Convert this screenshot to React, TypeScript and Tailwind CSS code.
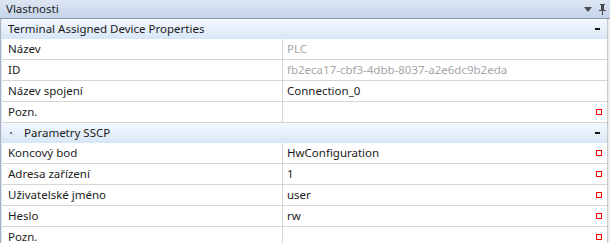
import React from 'react';

type Row = { label: string; value: string; readOnly?: boolean; marker?: boolean };

const general: Row[] = [
  { label: 'Název', value: 'PLC', readOnly: true },
  { label: 'ID', value: 'fb2eca17-cbf3-4dbb-8037-a2e6dc9b2eda', readOnly: true },
  { label: 'Název spojení', value: 'Connection_0' },
  { label: 'Pozn.', value: '', marker: true },
];

const sscp: Row[] = [
  { label: 'Koncový bod', value: 'HwConfiguration', marker: true },
  { label: 'Adresa zařízení', value: '1', marker: true },
  { label: 'Uživatelské jméno', value: 'user', marker: true },
  { label: 'Heslo', value: 'rw', marker: true },
  { label: 'Pozn.', value: '', marker: true },
];

const Category = ({ title, dot }: { title: string; dot?: boolean }) => (
  <div className="flex h-[20px] items-center bg-gradient-to-b from-[#f4f8fd] to-[#d7e6f7] pl-[6px] pr-[7px]">
    {dot && <span className="mr-[6px] ml-[2px] h-[2px] w-[2px] bg-[#777]" />}
    <span className={dot ? 'ml-[6px]' : ''}>{title}</span>
    <span className="ml-auto h-[2px] w-[5px] bg-[#111]" />
  </div>
);

const PropRow = ({ row }: { row: Row }) => (
  <div className="flex h-[21px] border-b border-[#d6d6d6]">
    <div className="flex w-[281px] items-center border-r border-[#d6d6d6] pl-[6px]">{row.label}</div>
    <div className="flex flex-1 items-center pl-[4px] pr-[5px]">
      <span className={row.readOnly ? 'text-[#a6a6a6]' : ''}>{row.value}</span>
      {row.marker && <span className="ml-auto h-[6px] w-[6px] border border-[#ff0000]" />}
    </div>
  </div>
);

export default function App() {
  return (
    <div
      className="h-[243px] w-[610px] overflow-hidden bg-white text-[11.5px] leading-none text-[#1b1b1b]"
      style={{ fontFamily: '"Segoe UI", "Noto Sans", sans-serif' }}
    >
      {/* title bar */}
      <div className="flex h-[19px] items-center border-b border-[#8e97a8] bg-gradient-to-b from-[#dde6f3] to-[#c5d3e9] pl-[6px] pr-[4px]">
        <span>Vlastnosti</span>
        <svg className="ml-auto" width="8" height="5" viewBox="0 0 8 5">
          <path d="M0 0h8L4 5z" fill="#4a4a4a" />
        </svg>
        <svg className="ml-[7px]" width="7" height="11" viewBox="0 0 7 11">
          <path d="M1 0h5v1H5v5h2v1H4v4H3V7H0V6h2V1H1z" fill="#4a4a4a" />
        </svg>
      </div>

      <div className="flex">
        <div className="w-[2px] border-l border-[#a9b2c2] bg-[#dfe5ef]" />
        <div className="flex-1">
          <Category title="Terminal Assigned Device Properties" />
          {general.map((r, i) => (
            <PropRow key={i} row={r} />
          ))}
          <Category title="Parametry SSCP" dot />
          {sscp.map((r, i) => (
            <PropRow key={i} row={r} />
          ))}
        </div>
        <div className="w-[3px] border-l border-[#c8c8c8] bg-[#ececec]" />
      </div>
    </div>
  );
}
